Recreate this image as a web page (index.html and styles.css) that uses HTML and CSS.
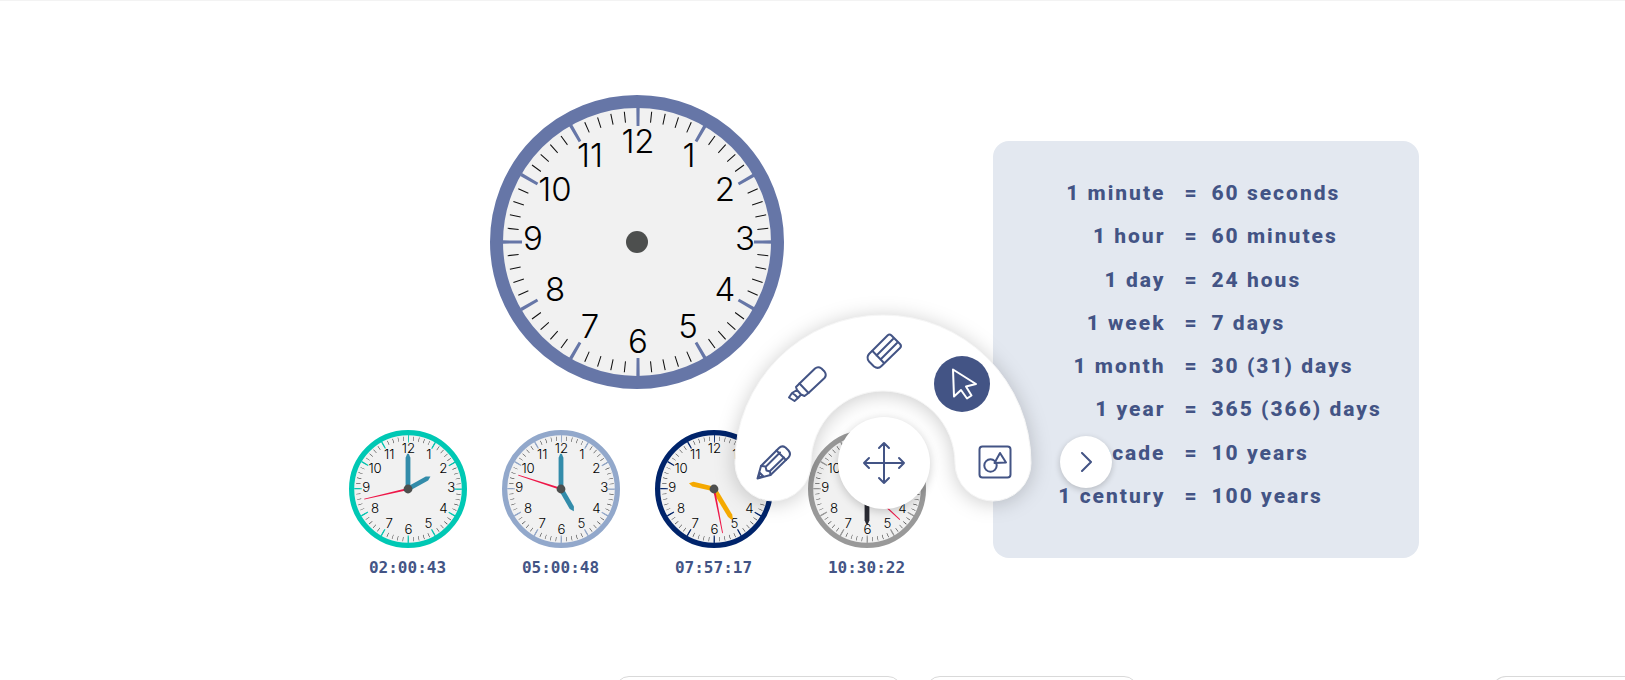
FILE: index.html
```html
<!DOCTYPE html>
<html lang="en">
<head>
<meta charset="utf-8">
<title>Clocks and units of time</title>
<link rel="stylesheet" href="styles.css">
</head>
<body>
<main class="stage">
  <section class="clocks">
    <svg class="clock clock-large" viewBox="-147 -147 294 294" role="img" aria-label="Clock face">
      <g id="face">
        <circle r="140.5" fill="#f1f1f1" stroke="currentColor" stroke-width="13"/>
        <g transform="translate(1 0) rotate(-90)" fill="none">
          <circle r="125.5" stroke="#111" stroke-width="11" pathLength="600" stroke-dasharray="0.8 9.2" stroke-dashoffset="0.4"/>
          <circle r="125.5" stroke="currentColor" stroke-width="19" pathLength="600" stroke-dasharray="2.4 47.6" stroke-dashoffset="1.2"/>
        </g>
        <g class="digits">
          <text x="1" y="-89">12</text><text x="52" y="-75">1</text><text x="88" y="-41">2</text>
          <text x="108" y="8">3</text><text x="88" y="59">4</text><text x="51" y="96">5</text>
          <text x="1" y="111">6</text><text x="-47" y="96">7</text><text x="-82" y="59">8</text>
          <text x="-104" y="8">9</text><text x="-82" y="-41">10</text><text x="-47" y="-75">11</text>
        </g>
      </g>
      <circle r="11" fill="#4d4f4e"/>
    </svg>
    <div class="clock-row">
      <figure class="clock-item">
        <svg class="clock clock-teal" viewBox="-147 -147 294 294">
          <use href="#face"/>
          <path class="hand-blue" d="M-6 0V-54L0-64L6-54V0Z" transform="rotate(61)"/>
          <path class="hand-blue" d="M-6 0V-78L-2-88H2L6-78V0Z"/>
          <path class="hand-second" d="M-2.500 0L-1-112H1L2.500 0Z" transform="rotate(257)"/>
          <circle r="11" fill="#4d4f4e"/>
        </svg>
        <figcaption>02:00:43</figcaption>
      </figure>
      <figure class="clock-item">
        <svg class="clock clock-sky" viewBox="-147 -147 294 294">
          <use href="#face"/>
          <path class="hand-blue" d="M-6 0V-54L0-64L6-54V0Z" transform="rotate(150)"/>
          <path class="hand-blue" d="M-6 0V-78L-2-88H2L6-78V0Z"/>
          <path class="hand-second" d="M-2.500 0L-1-112H1L2.500 0Z" transform="rotate(288)"/>
          <circle r="11" fill="#4d4f4e"/>
        </svg>
        <figcaption>05:00:48</figcaption>
      </figure>
      <figure class="clock-item">
        <svg class="clock clock-navy" viewBox="-147 -147 294 294">
          <use href="#face"/>
          <path class="hand-amber" d="M-6 0V-54L0-64L6-54V0Z" transform="rotate(283)"/>
          <path class="hand-amber" d="M-6 0V-78L-2-88H2L6-78V0Z" transform="rotate(149)"/>
          <path class="hand-second" d="M-2.500 0L-1-112H1L2.500 0Z" transform="rotate(169)"/>
          <circle r="11" fill="#4d4f4e"/>
        </svg>
        <figcaption>07:57:17</figcaption>
      </figure>
      <figure class="clock-item">
        <svg class="clock clock-gray" viewBox="-147 -147 294 294">
          <use href="#face"/>
          <path class="hand-dark" d="M-6 0V-54L0-64L6-54V0Z" transform="rotate(315)"/>
          <path class="hand-dark" d="M-6 0V-78L-2-88H2L6-78V0Z" transform="rotate(180)"/>
          <path class="hand-second" d="M-2.500 0L-1-112H1L2.500 0Z" transform="rotate(133)"/>
          <circle r="11" fill="#4d4f4e"/>
        </svg>
        <figcaption>10:30:22</figcaption>
      </figure>
    </div>
  </section>

  <section class="panel">
    <table class="units">
      <tr><th scope="row">1 minute</th><td class="eq">=</td><td>60 seconds</td></tr>
      <tr><th scope="row">1 hour</th><td class="eq">=</td><td>60 minutes</td></tr>
      <tr><th scope="row">1 day</th><td class="eq">=</td><td>24 hous</td></tr>
      <tr><th scope="row">1 week</th><td class="eq">=</td><td>7 days</td></tr>
      <tr><th scope="row">1 month</th><td class="eq">=</td><td>30 (31) days</td></tr>
      <tr><th scope="row">1 year</th><td class="eq">=</td><td>365 (366) days</td></tr>
      <tr><th scope="row">1 decade</th><td class="eq">=</td><td>10 years</td></tr>
      <tr><th scope="row">1 century</th><td class="eq">=</td><td>100 years</td></tr>
    </table>
  </section>

  <div class="toolbar" role="toolbar" aria-label="Drawing tools">
    <svg class="arc" viewBox="0 0 296 186" aria-hidden="true">
      <path d="M0 148A148 148 0 0 1 296 148A38 38 0 0 1 220 148A72 72 0 0 0 76 148A38 38 0 0 1 0 148Z" fill="#fff" stroke="#f5f5f5"/>
    </svg>
    <button class="tool pencil" aria-label="Pencil"><svg viewBox="0 0 40 40">
      <path d="M3.500 36.500L7 24L25 6Q28 3 31.500 5.500L34.500 8.500Q37.500 12 34.500 15.500L16.500 33Z"/>
      <path d="M7 24L11.500 24.500L12.500 28.500L16 29.500L16.500 33M12 24.500L26 10.500M16 29L30 15.500M22.500 8.500L32 18M4 36L6 31L9 34Z"/></svg></button>
    <button class="tool marker" aria-label="Highlighter"><svg viewBox="0 0 40 40">
      <path d="M12.500 19.500L28 4.500Q31 2 34.500 4.500L37.500 7.500Q40 11 37.500 14L21.500 29Z"/>
      <path d="M12.500 19.500L9 23L10 26L5 29L2 33.500L7.500 37L11 34L14 30.500L17.500 32L21.500 29M10 26L14 30.500M5 29L8 31L11 34"/></svg></button>
    <button class="tool eraser" aria-label="Eraser"><svg viewBox="0 0 40 40">
      <path d="M23.500 4.500Q25.500 2.500 27.500 4.500L36 13Q38 15 36 17L17.500 35Q14 38.500 10 35.500L5 30.500Q2 26.500 5 23Z"/>
      <path d="M8.500 20L20 32M12.500 24.500L29 8M16.500 28.500L33 12"/></svg></button>
    <button class="tool select active" aria-label="Select" aria-pressed="true"><svg viewBox="0 0 40 40">
      <path d="M11 5.500L34 20L24 22.500L29.500 31.500L25 34.500L19 26L12 32.500Z"/></svg></button>
    <button class="tool shapes" aria-label="Shapes"><svg viewBox="0 0 40 40">
      <rect x="4.500" y="4.500" width="31" height="31" rx="3"/><circle cx="15.500" cy="23.500" r="6.200"/><path d="M25 11L31 20.500L19.500 21Z"/></svg></button>
    <button class="move" aria-label="Move toolbar"><svg viewBox="0 0 44 44">
      <path d="M22 2V42M2 22H42M17 7L22 2L27 7M17 37L22 42L27 37M7 17L2 22L7 27M37 17L42 22L37 27"/></svg></button>
    <button class="next" aria-label="Next"><svg viewBox="0 0 20 20"><path d="M6 1L15 10L6 19"/></svg></button>
  </div>
</main>

<footer class="dock">
  <div class="dock-box dock-main"></div>
  <div class="dock-box dock-side"></div>
  <div class="dock-box dock-end"></div>
</footer>
</body>
</html>
```
FILE: styles.css
```css
* { box-sizing: border-box; }

html { overflow: hidden; }

body {
  margin: 0;
  height: 100vh;
  display: flex;
  flex-direction: column;
  overflow: hidden;
  border-top: 1px solid #f3f3f3;
  background: #fff;
  color: #435485;
  font-family: Roboto, "Liberation Sans", sans-serif;
}

.stage {
  position: relative;
  flex: 1;
  min-height: 0;
  margin-left: 142px;
  padding-bottom: 2px;
  display: flex;
  justify-content: center;
  align-items: center;
  gap: 67px;
}

/* Clocks */
.clocks {
  display: flex;
  flex-direction: column;
  align-items: center;
  gap: 41px;
}
.clock { display: block; width: 118px; height: 118px; }
.clock-large { width: 294px; height: 294px; color: #6676a7; }
.clock-teal { color: #00c8b4; }
.clock-sky { color: #92a8cb; }
.clock-navy { color: #00246b; }
.clock-gray { color: #999; }
.hand-blue { fill: #338caa; }
.hand-amber { fill: #f5a900; }
.hand-dark { fill: #2a2b33; }
.hand-second { fill: #ee1748; }
.digits {
  font-family: Inter, "Liberation Sans", sans-serif;
  font-size: 33px;
  font-weight: 300;
  text-anchor: middle;
  fill: #000;
}

.clock-row { display: flex; gap: 35px; }
.clock-item {
  margin: 0;
  display: flex;
  flex-direction: column;
  align-items: center;
  gap: 8px;
}
.clock-item figcaption {
  font: bold 16px/24px "DejaVu Sans Mono", monospace;
}

/* Units of time */
.panel {
  width: 426px;
  margin-top: 23px;
  padding: 31px 32px 40px 0;
  border-radius: 16px;
  background: #e3e8f0;
}
.units {
  width: 100%;
  height: 346px;
  border-collapse: collapse;
  font-size: 21px;
  font-weight: 800;
  letter-spacing: 2px;
  white-space: nowrap;
}
.units th, .units td { padding: 0; text-align: left; }
.units th { width: 173px; text-align: right; font-weight: inherit; }
.units .eq { width: 46px; padding-left: 19px; }

/* Radial toolbar */
.toolbar {
  position: absolute;
  top: 314px;
  left: 50%;
  width: 296px;
  height: 186px;
  margin-left: -149px;
}
.arc {
  display: block;
  width: 100%;
  overflow: visible;
  filter: drop-shadow(0 2px 10px rgba(0, 0, 0, 0.2));
}
.toolbar button {
  position: absolute;
  display: flex;
  align-items: center;
  justify-content: center;
  padding: 0;
  border: 0;
  border-radius: 50%;
  background: #fff;
  color: #435485;
}
.toolbar button svg {
  fill: none;
  stroke: currentColor;
  stroke-width: 2;
  stroke-linecap: round;
  stroke-linejoin: round;
}
.toolbar .tool { width: 56px; height: 56px; }
.tool svg { width: 40px; height: 40px; }
.toolbar .active { background: #435485; color: #fff; }
.pencil { left: 11px; top: 119px; }
.marker { left: 44px; top: 41px; }
.eraser { left: 121px; top: 8px; }
.select { left: 199px; top: 41px; }
.shapes { left: 232px; top: 119px; }
.toolbar .move {
  left: 103px;
  top: 102px;
  width: 92px;
  height: 92px;
  box-shadow: 0 2px 10px rgba(0, 0, 0, 0.2);
}
.move svg { width: 44px; height: 44px; }
.toolbar .next {
  left: 325px;
  top: 121px;
  width: 52px;
  height: 52px;
  box-shadow: 0 2px 6px rgba(0, 0, 0, 0.2);
}
.next svg { width: 20px; height: 20px; }

/* Bottom dock */
.dock {
  display: flex;
  gap: 24px;
  height: 4px;
  padding-left: 615px;
  overflow: hidden;
}
.dock-box {
  flex: none;
  height: 48px;
  border: 1px solid #d9d9d9;
  border-radius: 14px;
}
.dock-main { width: 287px; }
.dock-side { width: 212px; }
.dock-end {
  width: 133px;
  margin-left: auto;
  border-right: 0;
  border-radius: 14px 0 0 14px;
}
```
